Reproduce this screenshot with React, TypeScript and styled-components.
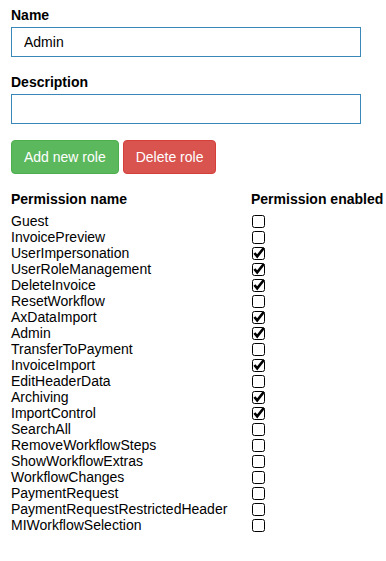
import React from "react";
import styled, { createGlobalStyle } from "styled-components";

const GlobalStyle = createGlobalStyle`
  body {
    margin: 0;
    background: #ffffff;
    font-family: "Liberation Sans", Arial, sans-serif;
    font-size: 14px;
    color: #000000;
  }
`;

const permissions: { name: string; enabled: boolean }[] = [
  { name: "Guest", enabled: false },
  { name: "InvoicePreview", enabled: false },
  { name: "UserImpersonation", enabled: true },
  { name: "UserRoleManagement", enabled: true },
  { name: "DeleteInvoice", enabled: true },
  { name: "ResetWorkflow", enabled: false },
  { name: "AxDataImport", enabled: true },
  { name: "Admin", enabled: true },
  { name: "TransferToPayment", enabled: false },
  { name: "InvoiceImport", enabled: true },
  { name: "EditHeaderData", enabled: false },
  { name: "Archiving", enabled: true },
  { name: "ImportControl", enabled: true },
  { name: "SearchAll", enabled: false },
  { name: "RemoveWorkflowSteps", enabled: false },
  { name: "ShowWorkflowExtras", enabled: false },
  { name: "WorkflowChanges", enabled: false },
  { name: "PaymentRequest", enabled: false },
  { name: "PaymentRequestRestrictedHeader", enabled: false },
  { name: "MIWorkflowSelection", enabled: false },
];

const CheckBox = ({ checked }: { checked: boolean }) => (
  <Box>
    <svg width="13" height="13" viewBox="0 0 13 13">
      <rect x="0.5" y="0.5" width="12" height="12" rx="2" fill="#fff" stroke="#000" />
      {checked && (
        <path d="M2.4 6 L5.2 9.4 L11.8 1" fill="none" stroke="#000" strokeWidth="2.6" />
      )}
    </svg>
  </Box>
);

export default function App() {
  return (
    <>
      <GlobalStyle />
      <Page>
        <Field>
          <Label>Name</Label>
          <Input defaultValue="Admin" />
        </Field>
        <Field $top={15}>
          <Label>Description</Label>
          <Input defaultValue="" />
        </Field>
        <Buttons>
          <Button $color="#5cb85c" $border="#4cae4c">Add new role</Button>
          <Button $color="#d9534f" $border="#d43f3a">Delete role</Button>
        </Buttons>
        <Table>
          <HeadCell>Permission name</HeadCell>
          <HeadCell>Permission enabled</HeadCell>
          {permissions.map((p) => (
            <React.Fragment key={p.name}>
              <Cell>{p.name}</Cell>
              <Cell>
                <CheckBox checked={p.enabled} />
              </Cell>
            </React.Fragment>
          ))}
        </Table>
      </Page>
    </>
  );
}

const Page = styled.div`
  padding: 5px 0 0 11px;
  width: 375px;
`;

const Field = styled.div<{ $top?: number }>`
  display: flex;
  flex-direction: column;
  margin-top: ${(p) => p.$top || 0}px;
`;

const Label = styled.label`
  font-weight: bold;
  font-size: 14px;
  line-height: 20px;
  margin-bottom: 2px;
`;

const Input = styled.input`
  box-sizing: border-box;
  width: 350px;
  height: 30px;
  border: 1px solid #3a87b9;
  padding: 0 12px;
  font-family: "Liberation Sans", Arial, sans-serif;
  font-size: 14px;
  color: #000;
  outline: none;
  margin: 0;
`;

const Buttons = styled.div`
  display: flex;
  gap: 4px;
  margin-top: 16px;
`;

const Button = styled.button<{ $color: string; $border: string }>`
  box-sizing: border-box;
  height: 34px;
  padding: 6px 12px;
  font-family: "Liberation Sans", Arial, sans-serif;
  font-size: 14px;
  line-height: 20px;
  color: #ffffff;
  background: ${(p) => p.$color};
  border: 1px solid ${(p) => p.$border};
  border-radius: 4px;
`;

const Table = styled.div`
  display: grid;
  grid-template-columns: 240px auto;
  margin-top: 15px;
  white-space: nowrap;
`;

const HeadCell = styled.div`
  font-weight: bold;
  line-height: 20px;
  margin-bottom: 4px;
`;

const Cell = styled.div`
  line-height: 16px;
  height: 16px;
  display: flex;
  align-items: center;
`;

const Box = styled.span`
  display: block;
  width: 13px;
  height: 13px;
  margin-left: 1px;
  svg {
    display: block;
  }
`;
